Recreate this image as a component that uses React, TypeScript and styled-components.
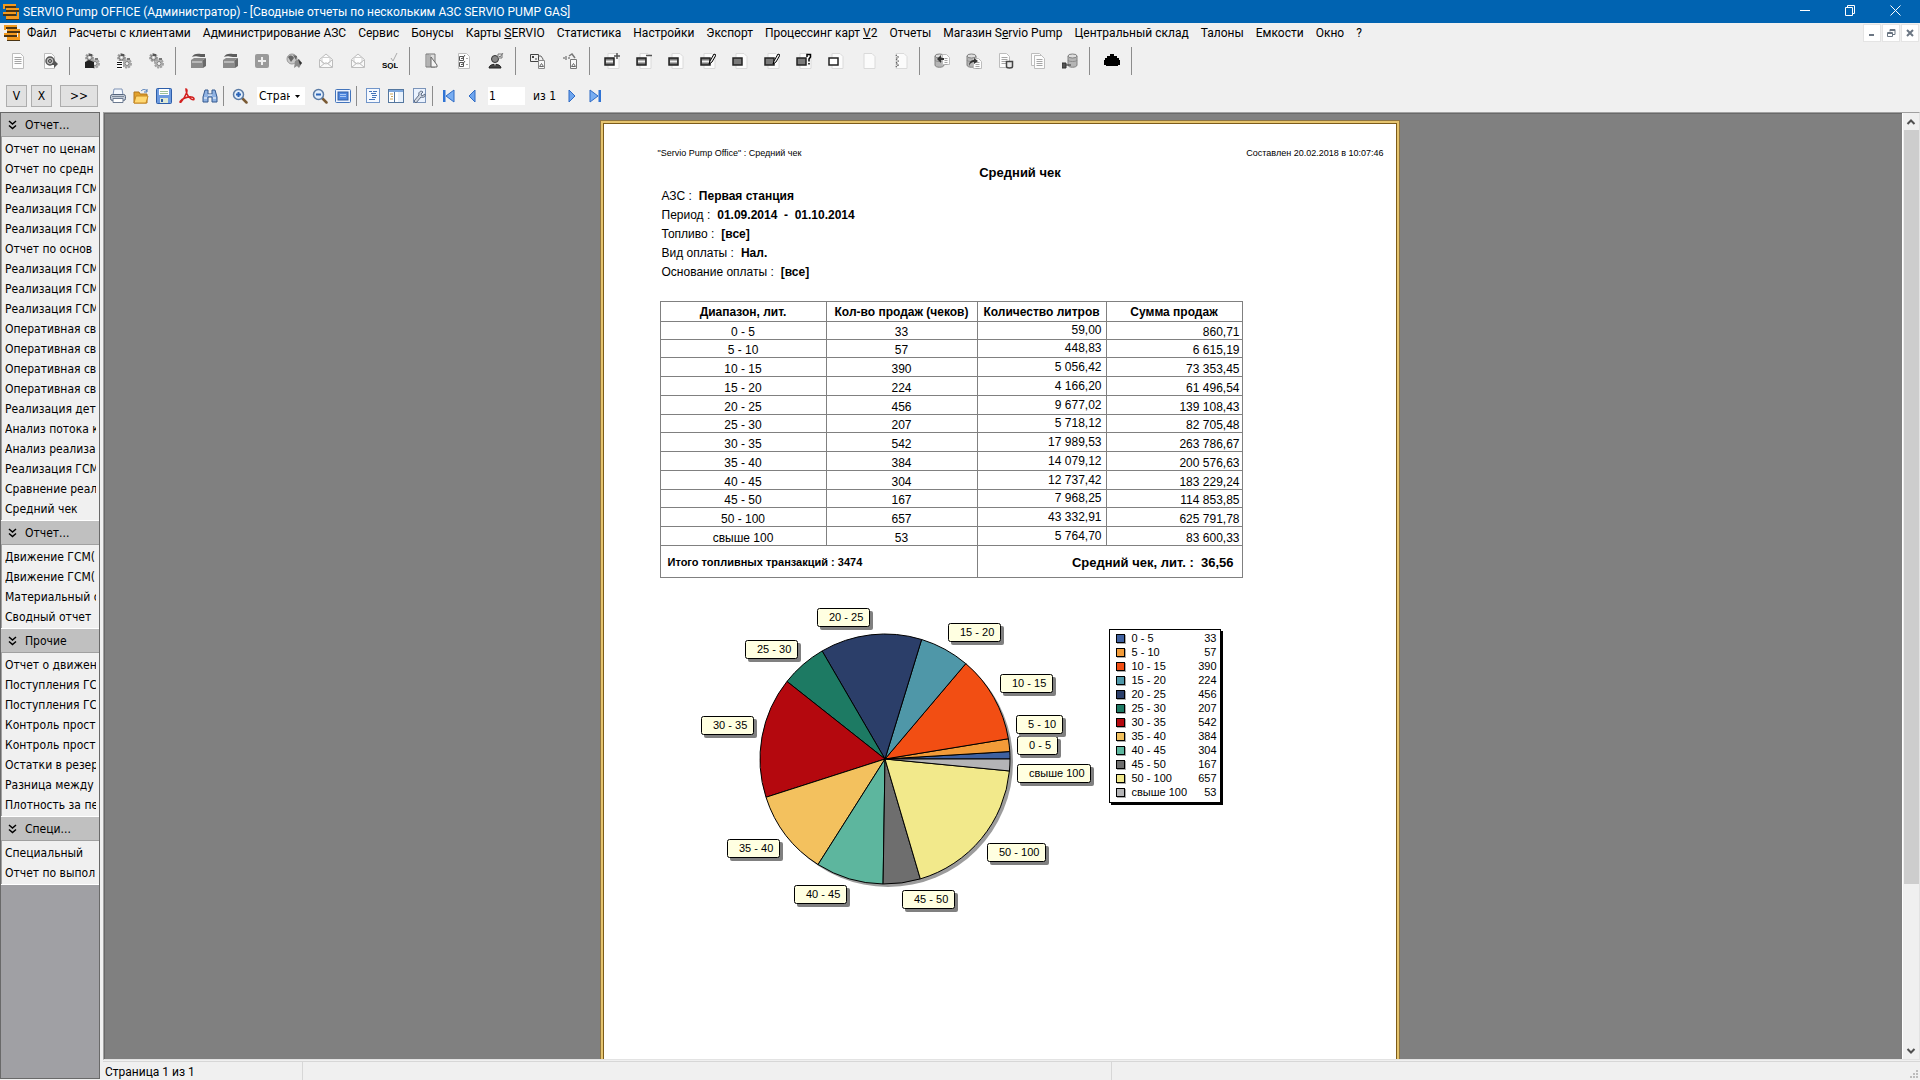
import React from "react";
import styled, { createGlobalStyle, css } from "styled-components";

const uiFont = css`font-family: Roboto, "Noto Sans", sans-serif;`;
const tahoma = css`font-family: "DejaVu Sans Condensed", "DejaVu Sans", sans-serif; font-stretch: condensed;`;
const arial = css`font-family: "Liberation Sans", Arial, sans-serif;`;

const GlobalStyle = createGlobalStyle`
  * { box-sizing: border-box; }
  body { margin: 0; background: #f0f0f0; overflow: hidden; }
  button, input, select { font: inherit; color: inherit; margin: 0; padding: 0; }
`;

const Window = styled.div`
  display: flex;
  flex-direction: column;
  height: 100vh;
  background: #f0f0f0;
  color: #000;
  font-size: 12px;
  ${uiFont}
`;

const TitleBar = styled.header`
  display: flex;
  align-items: center;
  height: 23px;
  padding-left: 3px;
  background: #0063b1;
  color: #fff;
`;

const TitleText = styled.h1`
  flex: 1;
  margin: 0 0 0 4px;
  font-size: 12px;
  font-weight: 400;
  white-space: nowrap;
`;

const CaptionButton = styled.button`
  display: flex;
  justify-content: center;
  align-items: center;
  align-self: flex-start;
  width: 45px;
  height: 20px;
  border: 0;
  background: transparent;
  &:last-child { margin-right: 2px; }
`;

const MenuBar = styled.nav`
  display: flex;
  align-items: center;
  height: 20px;
  padding-left: 4px;
`;

const MenuList = styled.div`
  display: flex;
  flex: 1;
  gap: 12px;
  padding-left: 7px;
`;

const MenuItem = styled.button`
  border: 0;
  background: transparent;
  line-height: 18px;
  white-space: nowrap;
`;

const ChildButtons = styled.div`
  display: flex;
  gap: 1px;
  padding-right: 1px;
`;

const ChildButton = styled.button`
  display: flex;
  justify-content: center;
  align-items: center;
  width: 18px;
  height: 18px;
  border: 1px solid #e4e4e4;
  background: #fff;
`;

const MainToolbar = styled.div`
  display: flex;
  align-items: center;
  height: 36px;
  padding-left: 2px;
`;

const ToolButton = styled.button<{ $width: number }>`
  display: flex;
  justify-content: center;
  align-items: center;
  width: ${(p) => p.$width}px;
  height: 24px;
  border: 0;
  background: transparent;
`;

const Divider = styled.span<{ $tall?: boolean }>`
  width: 1px;
  height: ${(p) => (p.$tall ? 28 : 20)}px;
  margin: ${(p) => (p.$tall ? "0 6px 0 3px" : "0 4px 0 2px")};
  background: #8c8c8c;
`;

const PreviewToolbar = styled.div`
  display: flex;
  align-items: center;
  height: 32px;
  padding: 2px 0 0 6px;
  ${tahoma}
`;

const FlatButton = styled.button<{ $wide?: boolean }>`
  width: ${(p) => (p.$wide ? 38 : 21)}px;
  height: 22px;
  margin: ${(p) => (p.$wide ? "0 8px 0 4px" : "0 4px 0 0")};
  border: 1px solid #adadad;
  background: #e1e1e1;
`;

const ZoomBox = styled.div`
  position: relative;
  margin: 0 3px 0 6px;
  svg { position: absolute; right: 5px; top: 8px; pointer-events: none; }
`;

const ZoomSelect = styled.select`
  display: block;
  width: 48px;
  height: 18px;
  padding: 0 15px 0 2px;
  border: 0;
  border-radius: 0;
  background: #fff;
  appearance: none;
`;

const PageInput = styled.input`
  width: 37px;
  height: 18px;
  margin: 0 8px 0 5px;
  padding: 0 1px;
  border: 0;
  background: #fff;
`;

const PageTotal = styled.label`
  width: 27px;
  white-space: nowrap;
`;

const Workspace = styled.div`
  display: flex;
  flex: 1;
  min-height: 0;
  padding-top: 1px;
`;

const Sidebar = styled.aside`
  width: 100px;
  border: 1px solid #696969;
  margin-bottom: 1px;
  background: #a0a0a4;
  ${tahoma}
`;

const Section = styled.section`
  border-bottom: 1px solid #fff;
  background: #f0f0f0;
`;

const SectionHeader = styled.button`
  display: flex;
  align-items: center;
  gap: 8px;
  width: 100%;
  height: 24px;
  padding-left: 7px;
  border: 0;
  border-bottom: 1px solid #a0a0a0;
  background: #c0c0c0;
`;

const SectionItems = styled.ul`
  margin: 0;
  padding: 2px 3px 1px;
  list-style: none;
  border-left: 1px solid #a0a0a0;
`;

const SectionItem = styled.li`
  height: 20px;
  overflow: hidden;
  a {
    color: #000;
    line-height: 20px;
    text-decoration: none;
    white-space: nowrap;
  }
`;

const Main = styled.main`
  display: flex;
  flex: 1;
  flex-direction: column;
  min-width: 0;
  padding-left: 3px;
`;

const Viewer = styled.div`
  display: flex;
  flex: 1;
  min-height: 0;
  border: 1px solid #a0a0a0;
  border-right-color: #e3e3e3;
  border-bottom-color: #e3e3e3;
`;

const Canvas = styled.div`
  flex: 1;
  display: flex;
  justify-content: center;
  overflow: hidden;
  padding: 7px 8px 0 0;
  border: 1px solid #696969;
  border-width: 1px 0 0 1px;
  background: #808080;
`;

const ScrollTrack = styled.div`
  display: flex;
  flex-direction: column;
  align-items: center;
  width: 17px;
  border-left: 1px solid #fff;
  background: #f0f0f0;
`;

const ScrollButton = styled.button`
  display: flex;
  justify-content: center;
  align-items: center;
  width: 16px;
  height: 17px;
  border: 0;
  background: transparent;
`;

const ScrollThumb = styled.div`
  flex: 752;
  width: 15px;
  background: #cdcdcd;
`;

const ScrollRest = styled.div`flex: 158;`;

const StatusBar = styled.footer`
  display: flex;
  align-items: stretch;
  height: 19px;
  margin-top: 1px;
  border-top: 1px solid #d7d7d7;
`;

const StatusPanel = styled.span<{ $grow: number }>`
  display: flex;
  flex: ${(p) => (p.$grow ? `${p.$grow} 1 0` : "0 0 200px")};
  padding-left: 2px;
  line-height: 20px;
  border-right: 1px solid #d7d7d7;
  &:last-child { border-right: 0; }
`;

const GripBox = styled.span`
  display: flex;
  align-items: flex-end;
  margin-left: auto;
  padding: 0 2px 2px 0;
`;

/* Report sheet */

const Sheet = styled.article`
  width: 798px;
  height: 1120px;
  flex: none;
  padding: 23px 13px 0 54px;
  border: 2px solid #e5c46f;
  box-shadow: 0 0 0 1px #8e7440, inset 0 0 0 1px #7d5c1a;
  background: #fff;
  ${arial}
`;

const SheetHeader = styled.div`
  display: flex;
  justify-content: space-between;
  padding-left: 1px;
  font-size: 9px;
  line-height: 14px;
`;

const ReportTitle = styled.h2`
  margin: 4px 0 5px;
  font-size: 13px;
  line-height: 18px;
  text-align: center;
`;

const Filters = styled.dl`
  margin: 0 0 19px 5px;
`;

const Filter = styled.div`
  display: flex;
  height: 19px;
  line-height: 19px;
  gap: 7px;
  dd { margin: 0; font-weight: 700; white-space: pre; }
`;

const DataTable = styled.table`
  width: 583px;
  margin-left: 3px;
  border-collapse: collapse;
  table-layout: fixed;
  line-height: 14px;
  td, th { padding: 0; border: 1px solid #808080; white-space: nowrap; }
  th { height: 20px; }
  tbody td { height: 19px; padding-top: 3px; text-align: center; }
  tbody tr:first-child td, tbody tr:nth-child(4n + 2) td { height: 18px; }
  tbody tr td:nth-child(3) { padding: 0 4px 1px 0; text-align: right; }
  tbody tr td:nth-child(4) { padding-right: 2px; text-align: right; }
  tfoot td { height: 32px; font-weight: 700; white-space: pre; }
`;

const TotalCell = styled.td`
  && { padding-left: 7px; font-size: 11px; }
`;

const AverageCell = styled.td`
  && { padding: 2px 8px 0 0; font-size: 13px; text-align: right; }
`;

const ChartRow = styled.figure`
  display: flex;
  align-items: flex-start;
  margin: 22px 0 0 3px;
  gap: 9px;
`;

const Legend = styled.table`
  width: 112px;
  margin-top: 29px;
  border: 1px solid #000;
  box-shadow: 2px 2px 0 #000;
  border-spacing: 0;
  padding: 1px 3px 3px 6px;
  background: #fff;
  font-size: 11px;
  line-height: 14px;
  td, th { padding: 0; font-weight: 400; text-align: left; white-space: nowrap; }
  td { text-align: right; }
`;

const Swatch = styled.span<{ $color: string }>`
  display: inline-block;
  width: 9px;
  height: 9px;
  margin-right: 7px;
  border: 1px solid #000;
  box-shadow: 1px 1px 0 #aaa;
  background: ${(p) => p.$color};
  vertical-align: -1px;
`;

/* Icons */

const Svg = ({ children, size = 16 }: { children: React.ReactNode; size?: number }) => (
  <svg width={size} height={size} viewBox="0 0 16 16" fill="none" aria-hidden="true">{children}</svg>
);

const Logo = () => (
  <svg width="16" height="18" viewBox="0 0 16 18" aria-hidden="true">
    <path d="M0 2h13v3H0zM3 6h13v3H3zM0 10h13v3H0zM3 14h13v3H3z" fill="#4a3413" />
    <path d="M0 1h13v2H0zM0 1h2v5H0zM3 5h13v2H3zM0 9h13v2H0zM14 9h2v4h-2zM3 13h13v3H3z" fill="#f39a1e" />
  </svg>
);

const Page = ({ x = 3, y = 1, w = 11, h = 14, lines = true }) => (
  <>
    <path d={`M${x} ${y}h${w - 3}l3 3v${h - 3}h-${w}z`} fill="#fdfdfd" stroke="#bdbdbd" />
    {lines && <path d={`M${x + 2} ${y + 4}h${w - 4}m-${w - 4} 2h${w - 4}m-${w - 4} 2h${w - 4}m-${w - 4} 2h${w - 4}`} stroke="#a5a5a5" />}
  </>
);

const Gears = () => (
  <>
    <circle cx="5.500" cy="4.500" r="3.500" stroke="#9a9a9a" strokeWidth="2" strokeDasharray="2 1" fill="#ccc" />
    <circle cx="5.500" cy="4.500" r="2.500" fill="#c4c4c4" stroke="#777" />
    <circle cx="5.500" cy="4.500" r="1" fill="#fff" />
    <path d="M5 1h3v2H5z" fill="#555" />
    <circle cx="11" cy="10.500" r="4" stroke="#a2a2a2" strokeWidth="2" strokeDasharray="2 1" fill="#bbb" />
    <circle cx="11" cy="10.500" r="2" fill="#f2f2f2" stroke="#808080" />
    <path d="M11 5h3v2h-3z" fill="#777" />
  </>
);

const Box = () => (
  <>
    <path d="M1 7l3-2h12l-3 2v8H1z" fill="#8b8b8b" />
    <path d="M2 8h10v2H2z" fill="#b9b9b9" />
    <path d="M13 7l3-2v8l-3 2z" fill="#6a6a6a" />
    <path d="M2 4c1-3 5-4 9-3h4v3h-4C6 3 4 3 2 4z" fill="#5c5c5c" />
  </>
);

const Envelope = () => (
  <>
    <path d="M1.500 6.500L8 1l6.500 5.500v8h-13z" fill="#fafafa" stroke="#bdbdbd" />
    <path d="M4 4.500h8v5L8 11 4 9.500z" fill="#fff" stroke="#cfcfcf" />
    <path d="M2 14l5-4h2l5 4M2 7l5 4M14 7l-5 4" stroke="#bdbdbd" />
  </>
);

const CardPage = ({ fill, stripe, mark }: { fill?: string; stripe?: boolean; mark?: string }) => (
  <>
    <path d="M4 .500h8l3 3v12H4z" fill="#fbfbfb" stroke="#dadada" />
    {fill && <rect x="1" y="5" width="9" height="7" fill={fill} stroke="#222" strokeWidth="1.500" />}
    {stripe && <path d="M2 8.500h7" stroke="#eee" strokeWidth="2" />}
    {mark === "plus" && <path d="M13 0v6M10 3h6" stroke="#555" strokeWidth="1.500" />}
    {mark === "minus" && <path d="M10 2.500h6" stroke="#555" strokeWidth="1.500" />}
    {mark === "pen" && <path d="M9 11l1-3 4-7 2 1-4 7z" fill="#eee" stroke="#000" />}
    {mark === "ask" && <path d="M11 4V1.500h3.500V4L13 6v2.500M13 10v1.500" stroke="#000" strokeWidth="1.500" />}
    {mark === "teeth" && <path d="M4 2l2 2-2 2 2 2-2 2 2 2-2 2" stroke="#555" strokeDasharray="1 1" strokeWidth="1.500" />}
  </>
);

const Database = ({ x = 0 }) => (
  <>
    <path d={`M${x + 1} 3v9c0 3 9 3 9 0V3z`} fill="#b5b5b5" stroke="#808080" />
    <ellipse cx={x + 5.5} cy="3" rx="4.500" ry="2" fill="#dedede" stroke="#808080" />
    <path d={`M${x + 1} 7c0 2 9 2 9 0`} stroke="#8a8a8a" />
  </>
);

const Marks = () => (
  <>
    <path d="M.500 1.500h8v7h-8zM2 3l2 2M4 3L2 5M5 6h2" stroke="#444" />
    <path d="M8 3h3l2 3v2" stroke="#666" />
    <path d="M8.500 7.500h6v8h-6z" fill="#f8f8f8" stroke="#888" />
    <path d="M9.500 13.500l2-3 2 3z" stroke="#666" />
  </>
);

const mainIcons: Record<string, React.ReactNode> = {
  page: <Page x={2.5} y={0.5} w={11} h={15} />,
  preview: <><Page x={2.5} y={0.5} w={10} h={15} lines={false} /><circle cx="8" cy="8" r="4" fill="#bbb" stroke="#555" strokeWidth="1.500" /><circle cx="8" cy="8" r="1.500" stroke="#444" /><path d="M10 10h2V7l4 4-4 4v-3h-2z" fill="#555" /></>,
  gearsBox: <><Gears /><path d="M1 9l4-2 5 2v6H1z" fill="#222" /></>,
  gearsList: <><Gears /><path d="M1 8h6v8H1z" fill="#fff" /><path d="M1 9.500h5m-5 2h5m-5 3h5" stroke="#111" /></>,
  gears: <Gears />,
  box: <Box />,
  plus: <><rect x="1" y="1" width="14" height="14" rx="2" fill="#9a9a9a" /><path d="M8 4v8M4 8h8" stroke="#eee" strokeWidth="2" /></>,
  globe: <><circle cx="6" cy="6" r="5" fill="#c8c8c8" stroke="#999" /><path d="M2 4c3-3 5-1 6 1L5 9zM7 2l4 1-1 4z" fill="#666" /><path d="M9 8l4-2 3 4-3 5-2-2-3 2z" fill="#8c8c8c" /><path d="M12 6l4 4-2 2z" fill="#333" /></>,
  envelope: <Envelope />,
  sql: <><text x="0" y="15" fontFamily="Liberation Sans, sans-serif" fontSize="8" fontWeight="700" fill="#000">SQL</text><path d="M9 5l2 3 4-8" stroke="#aaa" /></>,
  ruler: <><path d="M2 1h9v13H2z" fill="#ddd" stroke="#777" /><path d="M4 1v13M6 2v12" stroke="#888" /><path d="M7 4l6 8v2H7z" fill="#f3f3f3" stroke="#666" /></>,
  checklist: <><Page x={2.5} y={0.5} w={11} h={15} lines={false} /><path d="M3.500 3.500h4v4h-4zM3.500 9.500h4v4h-4zM5 5l1 1 3-4M5 11l1 1 3-4" stroke="#555" /><path d="M10 5.500h2m-2 6h2" stroke="#aaa" /></>,
  person: <><circle cx="7" cy="6" r="3.500" fill="#888" stroke="#333" /><path d="M1 15c0-5 12-5 12 0z" fill="#444" stroke="#222" /><path d="M6 10l1 3 1-3z" fill="#eee" /><path d="M10 1h4v4h-4zM11 3l1 1 3-4" fill="#eee" stroke="#777" /></>,
  marks: <Marks />,
  marksAlt: <><path d="M1 5h2m1-2v4m2-2h2" stroke="#555" /><path d="M7 3l3-2 3 4" stroke="#777" strokeWidth="1.500" /><path d="M8.500 6.500h6v9h-6z" fill="#f8f8f8" stroke="#777" /><path d="M9.500 13.500l2-3 2 3z" stroke="#666" /></>,
  cardPlus: <CardPage fill="#777" stripe mark="plus" />,
  cardMinus: <CardPage fill="#777" stripe mark="minus" />,
  card: <CardPage fill="#777" stripe />,
  cardPen: <CardPage fill="#777" stripe mark="pen" />,
  solid: <CardPage fill="#7a7a7a" />,
  solidPen: <CardPage fill="#7a7a7a" mark="pen" />,
  solidAsk: <CardPage fill="#7a7a7a" mark="ask" />,
  empty: <CardPage fill="#fff" />,
  blank: <CardPage />,
  teeth: <CardPage mark="teeth" />,
  dbPage: <><Database /><Page x={8.5} y={1.5} w={7} h={10} /><path d="M3 6l4-4v3h3v2H7v3z" fill="#333" /></>,
  dbArrow: <><Database /><Page x={7.5} y={5.5} w={8} h={10} /><path d="M3 13c0-5 3-6 5-6V5l4 3-4 3V9c-2 0-4 1-5 4z" fill="#333" /></>,
  pageCyl: <><Page x={1.5} y={0.5} w={10} h={14} /><path d="M8.500 8.500h6v5c0 2-6 2-6 0z" fill="#e8e8e8" stroke="#444" strokeWidth="1.500" /></>,
  pages: <><Page x={1.5} y={0.5} w={11} h={12} lines={false} /><Page x={4.5} y={2.5} w={10} h={13} /></>,
  dbPlug: <><Database x={5} /><path d="M0 10h4v5H0zM4 12h5" fill="#555" stroke="#333" /></>,
  search: <path d="M6 1h4v2h3v2h2v2h1v5h-2v1H2v-1H0V7h1V5h2V3h3z" fill="#000" />,
};

const mainGroups: string[][] = [
  ["page", "preview"],
  ["gearsBox", "gearsList", "gears"],
  ["box", "box", "plus", "globe", "envelope", "envelope", "sql"],
  ["ruler", "checklist", "person"],
  ["marks", "marksAlt"],
  ["cardPlus", "cardMinus", "card", "cardPen", "solid", "solidPen", "solidAsk", "empty", "blank", "teeth"],
  ["dbPage", "dbArrow", "pageCyl", "pages", "dbPlug"],
  ["search"],
];

const Lens = ({ plus }: { plus?: boolean }) => (
  <>
    <path d="M10 10l4.500 4.500" stroke="#7a5a34" strokeWidth="2.500" strokeLinecap="round" />
    <circle cx="6.500" cy="6.500" r="5" fill="#e2eefb" stroke="#5b7ba5" strokeWidth="1.500" />
    <path d={plus ? "M6.500 4v5M4 6.500h5" : "M4 6.500h5"} stroke="#2a64b8" strokeWidth="2" />
  </>
);

const previewIcons: Record<string, React.ReactNode> = {
  Печать: <><path d="M4 1h8l1 6H3z" fill="#f4f8ff" stroke="#7f93b5" /><rect x=".500" y="6.500" width="15" height="6" rx="2" fill="#c3cbd8" stroke="#56657d" /><path d="M3 10.500h10v4H3z" fill="#fff" stroke="#6b7a91" /><path d="M2 8.500h12" stroke="#7b8798" /></>,
  Открыть: <><path d="M1 4h5l1 2h7v9H1z" fill="#e2a12c" stroke="#b0741a" /><path d="M3 8h12l-2 7H1z" fill="#ffd873" stroke="#c98a22" /><path d="M8 3c2-2 4-2 6 0m0-2v3h-3" stroke="#4b77b4" /></>,
  Сохранить: <><rect x=".500" y=".500" width="15" height="15" rx="1" fill="#6d9be0" stroke="#2d5da8" /><path d="M3 1h10v6H3z" fill="#fff" /><path d="M4 3.500h8m-8 2h8" stroke="#9cc09a" /><path d="M4 10h8v5H4z" fill="#dfe9d4" /><path d="M5 11h2v3H5z" fill="#2d5da8" /></>,
  PDF: <path d="M7 1c2 0 1 6-5 13-2 1-1-2 4-4s9-1 9 1-5 0-7-5c-1-3-1-5-1-5z" stroke="#d3201f" strokeWidth="1.600" />,
  Найти: <><path d="M3 2h3v4h4V2h3l2 7v5h-5V9H6v5H1V9z" fill="#8fb2e2" stroke="#33588f" /><path d="M2 10h3m6 0h3M6 7h4" stroke="#fff" /></>,
  Увеличить: <Lens plus />,
  Уменьшить: <Lens />,
  "На весь экран": <><rect x=".500" y="1.500" width="15" height="13" rx="1" fill="#eef4ff" stroke="#4374bb" /><rect x="3" y="4" width="10" height="8" fill="#4f86dd" stroke="#2e5ca6" /><path d="M5 6.500h6m-6 2h6" stroke="#a9c9f7" /></>,
  Структура: <><rect x="1.500" y=".500" width="13" height="14" fill="#f5f9ff" stroke="#7195c9" /><path d="M4 3.500h3m1 0h4M6 5.500h5M7 7.500h5M7 9.500h4M4 11.500h6" stroke="#4272b8" /></>,
  Эскизы: <><rect x=".500" y="1.500" width="15" height="13" fill="#fff" stroke="#54779f" /><path d="M1 3h14" stroke="#7da7dd" strokeWidth="2" /><path d="M6.500 4v10" stroke="#54779f" /><path d="M2 6h3M3 8.500h2M2 11h3" stroke="#caa55c" /><path d="M10 4h5v10h-5z" fill="#e8f1fc" /></>,
  "Параметры страницы": <><rect x="2.500" y=".500" width="12" height="14" fill="#eaf2fe" stroke="#7b94b9" /><path d="M3 13l5-6c-1-3 2-5 4-3L10 6l1 2 3-2c1 3-2 4-4 3l-5 6z" fill="#d1d7e1" stroke="#5c6b83" /></>,
  "Первая страница": <><path d="M2 2h2.500v12H2z" fill="#2f73d4" /><path d="M13 2v12L5 8z" fill="#79aef2" stroke="#2f6bc4" /></>,
  "Предыдущая страница": <path d="M11 2v12L5 8z" fill="#6ea5ee" stroke="#2f6bc4" />,
  "Следующая страница": <path d="M5 2v12l6-6z" fill="#6ea5ee" stroke="#2f6bc4" />,
  "Последняя страница": <><path d="M3 2v12l8-6z" fill="#79aef2" stroke="#2f6bc4" /><path d="M11.500 2H14v12h-2.500z" fill="#2f73d4" /></>,
};

const PreviewButtons = ({ names }: { names: string[] }) => (
  <>
    {names.map((n) => (
      <ToolButton key={n} $width={23} aria-label={n}><Svg>{previewIcons[n]}</Svg></ToolButton>
    ))}
  </>
);

const Chevron = ({ d }: { d: string }) => (
  <svg width="10" height="10" viewBox="0 0 10 10" fill="none" aria-hidden="true">
    <path d={d} stroke="#505050" strokeWidth="2" />
  </svg>
);

/* Data */

const menu: React.ReactNode[] = [
  "Файл", "Расчеты с клиентами", "Администрирование АЗС", "Сервис", "Бонусы",
  <>Карты <u>S</u>ERVIO</>, "Статистика", "Настройки", "Экспорт",
  <>Процессинг карт <u>V</u>2</>, "Отчеты", <>Магазин S<u>e</u>rvio Pump</>,
  "Центральный склад", "Талоны", "Емкости", "Окно", "?",
];

const sections = [
  {
    title: "Отчет...",
    items: [
      "Отчет по ценам", "Отчет по средн", "Реализация ГСМ", "Реализация ГСМ", "Реализация ГСМ",
      "Отчет по основ", "Реализация ГСМ", "Реализация ГСМ", "Реализация ГСМ",
      "Оперативная св", "Оперативная св", "Оперативная св", "Оперативная св",
      "Реализация дет", "Анализ потока к", "Анализ реализа", "Реализация ГСМ",
      "Сравнение реал", "Средний чек",
    ],
  },
  { title: "Отчет...", items: ["Движение ГСМ(", "Движение ГСМ(", "Материальный о", "Сводный отчет"] },
  {
    title: "Прочие",
    items: [
      "Отчет о движен", "Поступления ГС", "Поступления ГС", "Контроль прост", "Контроль прост",
      "Остатки в резер", "Разница между", "Плотность за пе",
    ],
  },
  { title: "Специ...", items: ["Специальный", "Отчет по выпол"] },
];

const filters = [
  ["АЗС :", "Первая станция"],
  ["Период :", "01.09.2014  -  01.10.2014"],
  ["Топливо :", "[все]"],
  ["Вид оплаты :", "Нал."],
  ["Основание оплаты :", "[все]"],
];

type Range = { name: string; count: number; litres: string; sum: string; color: string; label: [number, number, number] };

/* label holds the callout's left, top and width inside the chart */
const ranges: Range[] = [
  { name: "0 - 5", count: 33, litres: "59,00", sum: "860,71", color: "#3f61a0", label: [357, 136, 41] },
  { name: "5 - 10", count: 57, litres: "448,83", sum: "6 615,19", color: "#f29b38", label: [356, 115, 47] },
  { name: "10 - 15", count: 390, litres: "5 056,42", sum: "73 353,45", color: "#f24e13", label: [340, 74, 53] },
  { name: "15 - 20", count: 224, litres: "4 166,20", sum: "61 496,54", color: "#4f97a8", label: [288, 23, 53] },
  { name: "20 - 25", count: 456, litres: "9 677,02", sum: "139 108,43", color: "#2b3e69", label: [157, 8, 53] },
  { name: "25 - 30", count: 207, litres: "5 718,12", sum: "82 705,48", color: "#1d7a63", label: [85, 40, 53] },
  { name: "30 - 35", count: 542, litres: "17 989,53", sum: "263 786,67", color: "#b4080e", label: [41, 116, 53] },
  { name: "35 - 40", count: 384, litres: "14 079,12", sum: "200 576,63", color: "#f3c15e", label: [67, 239, 53] },
  { name: "40 - 45", count: 304, litres: "12 737,42", sum: "183 229,24", color: "#5db69e", label: [134, 285, 53] },
  { name: "45 - 50", count: 167, litres: "7 968,25", sum: "114 853,85", color: "#6e6e6e", label: [242, 290, 53] },
  { name: "50 - 100", count: 657, litres: "43 332,91", sum: "625 791,78", color: "#f2e98b", label: [327, 243, 59] },
  { name: "свыше 100", count: 53, litres: "5 764,70", sum: "83 600,33", color: "#b4b4b6", label: [357, 164, 74] },
];

const CX = 225;
const CY = 159;
const R = 125;

const PieChart = () => {
  const total = ranges.reduce((s, r) => s + r.count, 0);
  const point = (n: number) => {
    const a = (n / total) * Math.PI * 2;
    return `${(CX + R * Math.cos(a)).toFixed(2)} ${(CY - R * Math.sin(a)).toFixed(2)}`;
  };
  let acc = 0;
  return (
    <svg width="440" height="320" viewBox="0 0 440 320" role="img" aria-label="Продажи по диапазонам">
      <circle cx={CX + 3} cy={CY + 3} r={R} fill="#9c9c9c" />
      {ranges.map((r) => {
        const from = point(acc);
        acc += r.count;
        return <path key={r.name} d={`M${CX} ${CY}L${from}A${R} ${R} 0 0 0 ${point(acc)}z`} fill={r.color} stroke="#000" strokeLinejoin="round" />;
      })}
      {ranges.map((r) => {
        const [x, y, w] = r.label;
        return (
          <g key={r.name}>
            <rect x={x + 3} y={y + 3} width={w} height="19" rx="2" fill="#808080" />
            <rect x={x + 0.5} y={y + 0.5} width={w - 1} height="18" rx="2" fill="#ffffe1" stroke="#000" />
            <text x={x + 12} y={y + 13} fontFamily="Liberation Sans, Arial, sans-serif" fontSize="11">{r.name}</text>
          </g>
        );
      })}
    </svg>
  );
};

export default function App() {
  return (
    <Window>
      <GlobalStyle />
      <TitleBar>
        <Logo />
        <TitleText>SERVIO Pump OFFICE (Администратор) - [Сводные отчеты по нескольким АЗС SERVIO PUMP GAS]</TitleText>
        <CaptionButton aria-label="Свернуть"><svg width="11" height="11"><path d="M0 5.500h10" stroke="#fff" /></svg></CaptionButton>
        <CaptionButton aria-label="Восстановить"><svg width="11" height="11" fill="none" stroke="#fff"><path d="M.500 2.500h7v8h-7zM2.500 2.500v-2h7v8h-2" /></svg></CaptionButton>
        <CaptionButton aria-label="Закрыть"><svg width="11" height="11" stroke="#fff"><path d="M.500.500l10 10m0-10l-10 10" /></svg></CaptionButton>
      </TitleBar>

      <MenuBar>
        <Logo />
        <MenuList>{menu.map((m, i) => <MenuItem key={i}>{m}</MenuItem>)}</MenuList>
        <ChildButtons>
          <ChildButton aria-label="Свернуть окно"><svg width="8" height="8"><path d="M1 6h5" stroke="#6b7683" strokeWidth="2" /></svg></ChildButton>
          <ChildButton aria-label="Восстановить окно"><svg width="9" height="9" fill="none" stroke="#6b7683"><path d="M.500 3.500h5v4h-5zM.500 4.500h5M3 2.500v-2h5v5H6M3 1.500h5" /></svg></ChildButton>
          <ChildButton aria-label="Закрыть окно"><svg width="8" height="8"><path d="M1 1l6 6m0-6L1 7" stroke="#6b7683" strokeWidth="2" /></svg></ChildButton>
        </ChildButtons>
      </MenuBar>

      <MainToolbar>
        {mainGroups.map((group, g) => (
          <React.Fragment key={g}>
            {group.map((name, i) => (
              <ToolButton key={i} $width={32} aria-label={name}><Svg>{mainIcons[name]}</Svg></ToolButton>
            ))}
            <Divider $tall />
          </React.Fragment>
        ))}
      </MainToolbar>

      <PreviewToolbar>
        <FlatButton>V</FlatButton>
        <FlatButton>X</FlatButton>
        <FlatButton $wide>&gt;&gt;</FlatButton>
        <PreviewButtons names={["Печать", "Открыть", "Сохранить", "PDF", "Найти"]} />
        <Divider />
        <PreviewButtons names={["Увеличить"]} />
        <ZoomBox>
          <ZoomSelect aria-label="Масштаб"><option>Страница</option></ZoomSelect>
          <svg width="5" height="3"><path d="M0 0h5L2.500 3z" /></svg>
        </ZoomBox>
        <PreviewButtons names={["Уменьшить", "На весь экран"]} />
        <Divider />
        <PreviewButtons names={["Структура", "Эскизы", "Параметры страницы"]} />
        <Divider />
        <PreviewButtons names={["Первая страница", "Предыдущая страница"]} />
        <PageInput id="page" defaultValue="1" />
        <PageTotal htmlFor="page">из 1</PageTotal>
        <PreviewButtons names={["Следующая страница", "Последняя страница"]} />
      </PreviewToolbar>

      <Workspace>
        <Sidebar>
          {sections.map((s, i) => (
            <Section key={i}>
              <SectionHeader>
                <svg width="9" height="10" viewBox="0 0 9 10" fill="none" aria-hidden="true"><path d="M1 1l3.500 3L8 1M1 5.500l3.500 3 3.500-3" stroke="#000" strokeWidth="1.500" /></svg>
                {s.title}
              </SectionHeader>
              <SectionItems>{s.items.map((t, k) => <SectionItem key={k}><a href="#report">{t}</a></SectionItem>)}</SectionItems>
            </Section>
          ))}
        </Sidebar>

        <Main>
          <Viewer>
            <Canvas>
              <Sheet id="report">
                <SheetHeader>
                  <span>"Servio Pump Office" : Средний чек</span>
                  <span>Составлен 20.02.2018 в 10:07:46</span>
                </SheetHeader>
                <ReportTitle>Средний чек</ReportTitle>
                <Filters>
                  {filters.map(([name, value]) => <Filter key={name}><dt>{name}</dt><dd>{value}</dd></Filter>)}
                </Filters>
                <DataTable>
                  <colgroup><col style={{ width: 166 }} /><col style={{ width: 151 }} /><col style={{ width: 129 }} /><col /></colgroup>
                  <thead><tr><th>Диапазон, лит.</th><th>Кол-во продаж (чеков)</th><th>Количество литров</th><th>Сумма продаж</th></tr></thead>
                  <tbody>
                    {ranges.map((r) => <tr key={r.name}><td>{r.name}</td><td>{r.count}</td><td>{r.litres}</td><td>{r.sum}</td></tr>)}
                  </tbody>
                  <tfoot>
                    <tr>
                      <TotalCell colSpan={2}>{"Итого топливных транзакций : 3474"}</TotalCell>
                      <AverageCell colSpan={2}>{"Средний чек, лит. :  36,56"}</AverageCell>
                    </tr>
                  </tfoot>
                </DataTable>
                <ChartRow>
                  <PieChart />
                  <Legend>
                    <tbody>
                      {ranges.map((r) => <tr key={r.name}><th scope="row"><Swatch $color={r.color} />{r.name}</th><td>{r.count}</td></tr>)}
                    </tbody>
                  </Legend>
                </ChartRow>
              </Sheet>
            </Canvas>
            <ScrollTrack>
              <ScrollButton aria-label="Вверх"><Chevron d="M1.500 7L5 3.500 8.500 7" /></ScrollButton>
              <ScrollThumb />
              <ScrollRest />
              <ScrollButton aria-label="Вниз"><Chevron d="M1.500 3L5 6.500 8.500 3" /></ScrollButton>
            </ScrollTrack>
          </Viewer>
          <StatusBar>
            <StatusPanel $grow={0}>Страница 1 из 1</StatusPanel>
            <StatusPanel $grow={1} />
            <StatusPanel $grow={1}>
              <GripBox><svg width="8" height="8" fill="#bcbcbc" aria-hidden="true"><path d="M6 0h2v2H6zM3 3h2v2H3zM6 3h2v2H6zM0 6h2v2H0zM3 6h2v2H3zM6 6h2v2H6z" /></svg></GripBox>
            </StatusPanel>
          </StatusBar>
        </Main>
      </Workspace>
    </Window>
  );
}
